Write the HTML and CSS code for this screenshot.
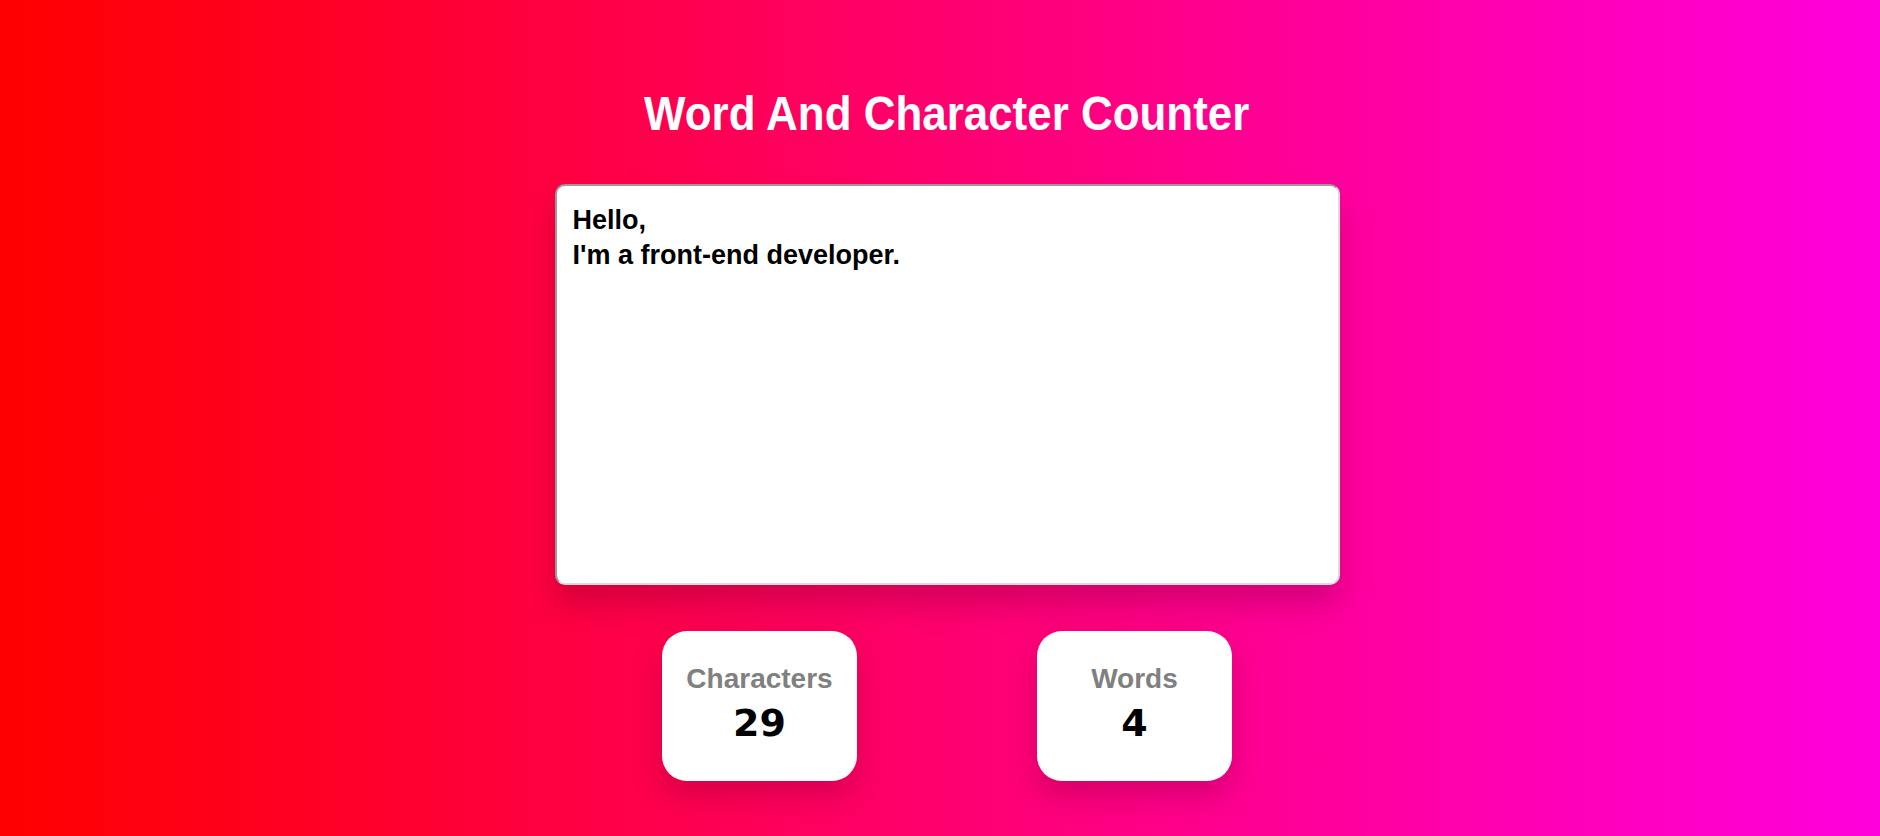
FILE: index.html
```html
<!DOCTYPE html>
<html lang="en">
<head>
<meta charset="utf-8">
<title>Word And Character Counter</title>
<link rel="stylesheet" href="styles.css">
</head>
<body>
<main class="app">
  <h1 class="title">Word And Character Counter</h1>
  <textarea class="editor" id="editor" spellcheck="false">Hello,
I'm a front-end developer.</textarea>
  <div class="stats">
    <div class="card">
      <span class="card-label">Characters</span>
      <span class="card-value">29</span>
    </div>
    <div class="card">
      <span class="card-label">Words</span>
      <span class="card-value">4</span>
    </div>
  </div>
</main>
<script src="script.js"></script>
</body>
</html>
```
FILE: styles.css
```css
* { box-sizing: border-box; }
html, body { margin: 0; padding: 0; }
body {
  min-height: 100vh;
  background: linear-gradient(to right, #ff0000, #ff00dd);
  font-family: "Liberation Sans", Arial, sans-serif;
}
.app {
  display: flex;
  flex-direction: column;
  align-items: center;
  padding-top: 87px;
  padding-left: 14px;
}
.title {
  margin: 0;
  font-family: "Liberation Sans", Arial, sans-serif;
  font-size: 48px;
  line-height: 54px;
  font-weight: 700;
  color: #fff;
  transform: scaleX(0.915);
}
.editor {
  margin-top: 43px;
  width: 785px;
  height: 401px;
  padding: 17px 16px 14px;
  border-style: solid;
  border-width: 2px;
  border-color: #9a9a9a #dcdcdc #dcdcdc #9a9a9a;
  border-radius: 10px;
  background: #fff;
  color: #000;
  font-family: "Liberation Sans", Arial, sans-serif;
  font-weight: 700;
  font-size: 27px;
  line-height: 35px;
  resize: none;
  outline: none;
  caret-color: #000;
  box-shadow: 0 20px 30px rgba(90, 0, 30, 0.25);
}
.stats {
  margin-top: 46px;
  display: flex;
  justify-content: center;
  gap: 180px;
}
.card {
  width: 195px;
  height: 150px;
  background: #fff;
  border-radius: 25px;
  display: flex;
  flex-direction: column;
  align-items: center;
  padding-top: 32px;
  box-shadow: 0 15px 30px rgba(90, 0, 30, 0.25);
}
.card-label {
  font-size: 28px;
  line-height: 32px;
  font-weight: 700;
  color: #808080;
}
.card-value {
  margin-top: 5px;
  font-family: "DejaVu Sans", "Liberation Sans", sans-serif;
  font-size: 38px;
  line-height: 46px;
  font-weight: 700;
  color: #000;
}
```
FILE: script.js
```js
var ed = document.getElementById('editor');
ed.focus();
ed.setSelectionRange(5, 5);
```
